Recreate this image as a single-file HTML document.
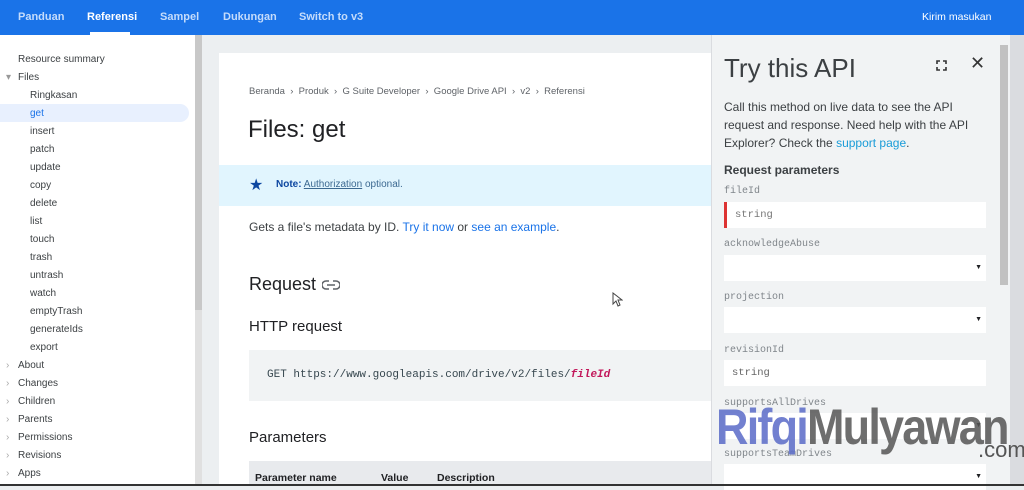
<!DOCTYPE html>
<html><head><meta charset="utf-8"><style>
*{margin:0;padding:0;box-sizing:border-box}
body{width:1024px;height:486px;overflow:hidden;position:relative;background:#eceff1;font-family:"Liberation Sans",sans-serif;color:#202124}
.a{position:absolute;white-space:nowrap}
.nav{left:0;top:0;width:1024px;height:35px;background:#1a73e8}
.nav span{position:absolute;top:11px;font-size:11px;font-weight:bold;color:#c5dcfb}
.side{left:0;top:35px;width:195px;height:451px;background:#fff}
.si{position:absolute;font-size:10px;color:#3c4043}
.mono{font-family:"Liberation Mono",monospace}
.panel{left:711px;top:35px;width:286px;height:451px;background:#f1f3f4;border-left:1px solid #dadce0}
.lbl{position:absolute;left:12px;font-size:10px;color:#80868b;font-family:"Liberation Mono",monospace}
.inp{position:absolute;left:12px;width:262px;height:26px;background:#fff}
.arr{position:absolute;right:4px;top:9px;font-size:7px;color:#202124}
</style></head><body>
<div class="a nav">
<span style="left:18px">Panduan</span>
<span style="left:87px;color:#fff">Referensi</span>
<span style="left:160px">Sampel</span>
<span style="left:223px">Dukungan</span>
<span style="left:299px">Switch to v3</span>
<span style="left:922px;font-weight:normal;color:#fff;font-size:10.5px">Kirim masukan</span>
<div style="position:absolute;left:90px;top:32px;width:40px;height:3px;background:#fff"></div>
</div>
<div class="a side">
<div style="position:absolute;left:0;top:69px;width:189px;height:18px;background:#e8f0fe;border-radius:0 9px 9px 0"></div>
<div class="si" style="left:18px;top:19px">Resource summary</div>
<div class="si" style="left:6px;top:37px;color:#999">▾</div><div class="si" style="left:18px;top:37px">Files</div>
<div class="si" style="left:30px;top:55px">Ringkasan</div>
<div class="si" style="left:30px;top:73px;color:#1a73e8">get</div>
<div class="si" style="left:30px;top:91px">insert</div>
<div class="si" style="left:30px;top:109px">patch</div>
<div class="si" style="left:30px;top:127px">update</div>
<div class="si" style="left:30px;top:145px">copy</div>
<div class="si" style="left:30px;top:163px">delete</div>
<div class="si" style="left:30px;top:181px">list</div>
<div class="si" style="left:30px;top:199px">touch</div>
<div class="si" style="left:30px;top:217px">trash</div>
<div class="si" style="left:30px;top:235px">untrash</div>
<div class="si" style="left:30px;top:253px">watch</div>
<div class="si" style="left:30px;top:271px">emptyTrash</div>
<div class="si" style="left:30px;top:289px">generateIds</div>
<div class="si" style="left:30px;top:307px">export</div>
<div class="si" style="left:6px;top:325px;color:#aaa">›</div><div class="si" style="left:18px;top:325px">About</div>
<div class="si" style="left:6px;top:343px;color:#aaa">›</div><div class="si" style="left:18px;top:343px">Changes</div>
<div class="si" style="left:6px;top:361px;color:#aaa">›</div><div class="si" style="left:18px;top:361px">Children</div>
<div class="si" style="left:6px;top:379px;color:#aaa">›</div><div class="si" style="left:18px;top:379px">Parents</div>
<div class="si" style="left:6px;top:397px;color:#aaa">›</div><div class="si" style="left:18px;top:397px">Permissions</div>
<div class="si" style="left:6px;top:415px;color:#aaa">›</div><div class="si" style="left:18px;top:415px">Revisions</div>
<div class="si" style="left:6px;top:433px;color:#aaa">›</div><div class="si" style="left:18px;top:433px">Apps</div>
</div>
<div class="a" style="left:195px;top:35px;width:7px;height:451px;background:#e0e0e0"></div>
<div class="a" style="left:195px;top:35px;width:7px;height:275px;background:#c8c8c8"></div>
<div class="a" style="left:219px;top:53px;width:492px;height:433px;background:#fff"></div>
<div class="a" style="left:249px;top:86px;font-size:9.5px;color:#5f6368">Beranda &nbsp;›&nbsp; Produk &nbsp;›&nbsp; G Suite Developer &nbsp;›&nbsp; Google Drive API &nbsp;›&nbsp; v2 &nbsp;›&nbsp; Referensi</div>
<div class="a" style="left:248px;top:116px;font-size:24px">Files: get</div>
<div class="a" style="left:219px;top:165px;width:492px;height:41px;background:#e1f5fe"></div>
<div class="a" style="left:249px;top:175px;font-size:16px;color:#0d47a1">★</div>
<div class="a" style="left:276px;top:179px;font-size:10px;color:#3c6991"><b style="color:#0d47a1">Note:</b> <u>Authorization</u> optional.</div>
<div class="a" style="left:249px;top:220px;font-size:12px;color:#3c4043">Gets a file's metadata by ID. <span style="color:#1a73e8">Try it now</span> or <span style="color:#1a73e8">see an example</span>.</div>
<div class="a" style="left:249px;top:274px;font-size:18px">Request</div>
<svg class="a" style="left:322px;top:280px" width="18" height="10" viewBox="0 0 18 10"><path d="M7 1H4a4 4 0 0 0 0 8h3M11 1h3a4 4 0 0 1 0 8h-3M5 5h8" fill="none" stroke="#5f6368" stroke-width="1.5"/></svg>
<div class="a" style="left:249px;top:318px;font-size:15px">HTTP request</div>
<div class="a" style="left:249px;top:350px;width:462px;height:51px;background:#f1f3f4"></div>
<div class="a mono" style="left:267px;top:369px;font-size:11px;color:#37474f">GET https://www.googleapis.com/drive/v2/files/<i style="color:#c2185b;font-weight:bold">fileId</i></div>
<div class="a" style="left:249px;top:429px;font-size:15px">Parameters</div>
<div class="a" style="left:249px;top:461px;width:462px;height:25px;background:#e8eaed"></div>
<div class="a" style="left:255px;top:472px;font-size:10.5px;font-weight:bold;color:#202124">Parameter name</div>
<div class="a" style="left:381px;top:472px;font-size:10.5px;font-weight:bold">Value</div>
<div class="a" style="left:437px;top:472px;font-size:10.5px;font-weight:bold">Description</div>
<svg class="a" style="left:612px;top:292px" width="11" height="15" viewBox="0 0 11 15"><path d="M1 1v11l3-3 2 5 2-1-2-5h4z" fill="#fff" stroke="#444"/></svg>
<div class="a panel">
<div style="position:absolute;left:12px;top:18px;font-size:26px;color:#3c4043;font-weight:300">Try this API</div>
<svg style="position:absolute;left:224px;top:25px" width="11" height="11" viewBox="0 0 11 11"><path d="M1 4V1h3M7 1h3v3M10 7v3H7M4 10H1V7" fill="none" stroke="#333" stroke-width="1.6"/></svg>
<div style="position:absolute;left:258px;top:18px;font-size:18px;color:#333">✕</div>
<div style="position:absolute;left:12px;top:63px;font-size:12px;line-height:18px;color:#3c4043;white-space:normal;width:265px">Call this method on live data to see the API request and response. Need help with the API Explorer? Check the <span style="color:#1a9cd8">support page</span>.</div>
<div style="position:absolute;left:12px;top:128px;font-size:12px;font-weight:bold;color:#3c4043">Request parameters</div>
<div class="lbl" style="top:151px">fileId</div>
<div class="inp" style="top:167px;border-left:3px solid #d33"><span class="mono" style="position:absolute;left:8px;top:7px;font-size:10.5px;color:#777">string</span></div>
<div class="lbl" style="top:204px">acknowledgeAbuse</div>
<div class="inp" style="top:220px"><span class="arr">▼</span></div>
<div class="lbl" style="top:257px">projection</div>
<div class="inp" style="top:272px"><span class="arr">▼</span></div>
<div class="lbl" style="top:310px">revisionId</div>
<div class="inp" style="top:325px"><span class="mono" style="position:absolute;left:8px;top:7px;font-size:10.5px;color:#666">string</span></div>
<div class="lbl" style="top:363px">supportsAllDrives</div>
<div class="inp" style="top:378px"><span class="arr">▼</span></div>
<div class="lbl" style="top:414px">supportsTeamDrives</div>
<div class="inp" style="top:429px"><span class="arr">▼</span></div>
</div>
<div class="a" style="left:997px;top:35px;width:13px;height:451px;background:#f1f3f4"></div>
<div class="a" style="left:1000px;top:45px;width:8px;height:240px;background:#c1c1c1"></div>
<div class="a" style="left:1010px;top:35px;width:14px;height:451px;background:#dadce0"></div>
<div class="a" style="left:716px;top:398px;font-size:50px;font-weight:bold;letter-spacing:-2px;color:#5a6bc8;opacity:.85;transform:scaleX(.9);transform-origin:left top">Rifqi<span style="color:#555">Mulyawan</span></div>
<div class="a" style="left:978px;top:437px;font-size:22px;color:#555">.com</div>
<div class="a" style="left:0;top:484px;width:1024px;height:2px;background:#333"></div>
</body></html>
